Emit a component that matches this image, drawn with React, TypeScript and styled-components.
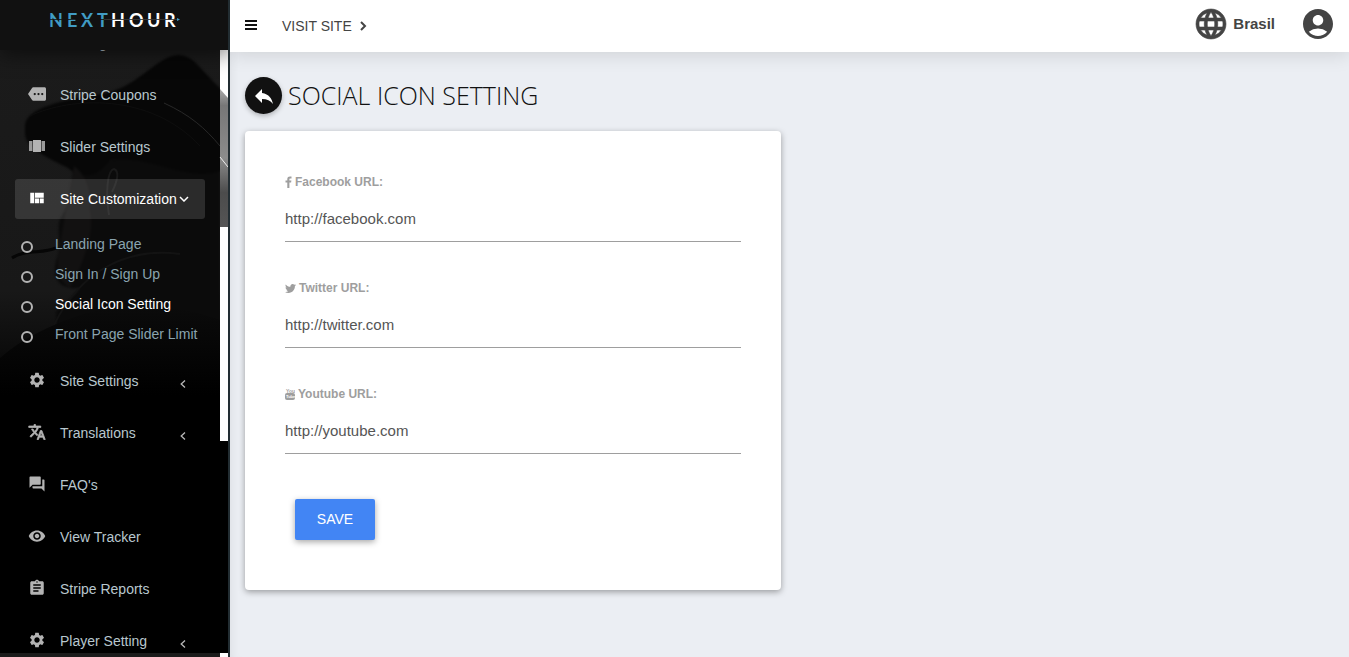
import React from "react";
import styled, { createGlobalStyle } from "styled-components";
import {
  MdMore,
  MdViewQuilt,
  MdSettings,
  MdTranslate,
  MdForum,
  MdVisibility,
  MdAssignment,
  MdLanguage,
  MdAccountCircle,
  MdReply,
  MdInventory,
} from "react-icons/md";
import { FaTwitter } from "react-icons/fa";

const GlobalStyle = createGlobalStyle`
  *, *::before, *::after { box-sizing: border-box; }
  body {
    margin: 0;
    background: #ebeef3;
    font-family: "Liberation Sans", Arial, sans-serif;
    font-size: 14px;
    color: #333;
  }
`;

const Layout = styled.div`
  display: flex;
  min-height: 100vh;
`;

const Sidebar = styled.aside`
  position: sticky;
  top: 0;
  display: flex;
  flex-direction: column;
  flex: none;
  width: 230px;
  height: 100vh;
  background: #000;
  border-right: 2px solid #222d32;
  overflow: hidden;
`;

const Brand = styled.a`
  position: relative;
  z-index: 2;
  display: block;
  flex: none;
  height: 50px;
  margin-right: -2px;
  background: #111;
  box-shadow: 0 5px 20px rgba(0, 0, 0, 0.5);
`;

const Nav = styled.nav`
  position: relative;
  flex: 1;
  min-height: 0;
  overflow: hidden;
`;

const Backdrop = styled.svg`
  position: absolute;
  top: 0;
  left: 0;
`;

const Menu = styled.ul`
  position: relative;
  display: flex;
  flex-direction: column;
  gap: 12px;
  margin: -27px 23px 0 15px;
  padding: 0;
  list-style: none;
`;

const MenuLink = styled.a<{ $active?: boolean }>`
  display: flex;
  align-items: center;
  height: 40px;
  padding: 0 15px 0 13px;
  border-radius: 3px;
  background: ${(p) => (p.$active ? "rgba(200, 200, 200, 0.17)" : "transparent")};
  color: ${(p) => (p.$active ? "#fff" : "#b8c7ce")};
  text-decoration: none;
  white-space: nowrap;

  > svg:first-child {
    flex: none;
    width: 18px;
    height: 18px;
    margin: 0 14px 2px 0;
    color: ${(p) => (p.$active ? "#fff" : "#b3b3b3")};
  }

  path[fill="none"] {
    stroke: none;
  }
`;

const LinkText = styled.span`
  line-height: 20px;
`;

const MenuItem = styled.li`
  width: 190px;
`;

const SideArrow = styled.svg`
  width: 6px;
  height: 10px;
  margin: 6px 4px 0 auto;
  color: #b8b8b8;
`;

const DownArrow = styled.svg`
  width: 10px;
  height: 6px;
  margin-left: 2px;
`;

const SubMenu = styled.ul`
  margin: 10px 0 0;
  padding: 0;
  list-style: none;
`;

const SubLink = styled.a<{ $active?: boolean }>`
  display: flex;
  align-items: center;
  gap: 22px;
  height: 30px;
  padding-left: 6px;
  color: ${(p) => (p.$active ? "#fff" : "#8aa4af")};
  text-decoration: none;
  white-space: nowrap;
`;

const Ring = styled.span`
  flex: none;
  width: 12px;
  height: 12px;
  margin-top: 6px;
  border: 2px solid #b3b3b3;
  border-radius: 50%;
`;

const Page = styled.div`
  display: flex;
  flex-direction: column;
  flex: 1;
  min-width: 0;
  box-shadow: inset 8px 0 8px -6px rgba(0, 0, 0, 0.06);
`;

const TopBar = styled.header`
  display: flex;
  align-items: center;
  height: 52px;
  padding: 0 15px;
  background: #fff;
  box-shadow: 0 2px 20px rgba(0, 0, 0, 0.13);
`;

const BarsButton = styled.button`
  display: flex;
  width: 12px;
  margin: 0 25px 2px 0;
  padding: 0;
  border: 0;
  background: none;
  color: #111;
`;

const VisitLink = styled.a`
  display: flex;
  align-items: center;
  gap: 8px;
  color: #444;
  line-height: 20px;
  text-decoration: none;
`;

const TopActions = styled.div`
  display: flex;
  align-items: center;
  gap: 25px;
  margin: 0 -2px 5px auto;
`;

const LanguageButton = styled.button`
  display: flex;
  align-items: center;
  gap: 4px;
  padding: 0;
  border: 0;
  background: none;
  color: #444;
  font: bold 15px "Liberation Sans", Arial, sans-serif;

  path:not([fill="none"]) {
    stroke-width: 0.4px;
  }

  path[fill="none"] {
    stroke: none;
  }
`;

const AccountButton = styled.button`
  display: flex;
  padding: 0;
  border: 0;
  background: none;
  color: #444;
`;

const Content = styled.main`
  padding: 25px 15px;
`;

const TitleRow = styled.div`
  display: flex;
  align-items: center;
  gap: 6px;
  margin-bottom: 17px;
`;

const BackLink = styled.a`
  display: flex;
  align-items: center;
  justify-content: center;
  width: 37px;
  height: 37px;
  border-radius: 50%;
  background: #111;
  color: #fff;
  box-shadow: 0 2px 5px rgba(0, 0, 0, 0.26);
`;

const Title = styled.h1`
  margin: 0;
  color: #111;
  font: 300 25px/37px "Open Sans", sans-serif;
`;

const Columns = styled.div`
  display: grid;
  grid-template-columns: 1fr 1fr;
  gap: 17px;
`;

const Card = styled.form`
  padding: 41px 40px 50px;
  border-radius: 4px;
  background: #fff;
  box-shadow: 0 2px 6px rgba(0, 0, 0, 0.35);
`;

const Field = styled.div`
  display: flex;
  flex-direction: column;
  gap: 5px;
  margin-bottom: 36px;
`;

const Label = styled.label`
  display: flex;
  align-items: center;
  gap: 3px;
  color: #9e9e9e;
  font-size: 12px;
  font-weight: bold;
  line-height: 20px;
`;

const TextInput = styled.input`
  width: 100%;
  height: 45px;
  padding: 0 0 2px;
  border: 0;
  border-bottom: 1px solid #9e9e9e;
  outline: 0;
  background: transparent;
  color: #555;
  font: 15px "Liberation Sans", Arial, sans-serif;
`;

const SaveButton = styled.button`
  display: block;
  width: 80px;
  height: 41px;
  margin: 45px 0 0 10px;
  padding: 0 0 2px;
  border: 0;
  border-radius: 2px;
  background: #4285f4;
  color: #fff;
  font: 14px "Liberation Sans", Arial, sans-serif;
  box-shadow: 0 2px 6px rgba(0, 0, 0, 0.35);
`;

const Fields = styled.div`
  ${Field}:last-child {
    margin-bottom: 0;
  }
`;

const Logo = () => (
  <svg width="228" height="50" role="img" aria-label="NextHour">
    <g fontFamily="Lato, sans-serif" fontWeight="700" fontSize="18">
      <text x="49 67 81 97" y="27" fill="#419cc4">NEXT</text>
      <text x="111 129 147 164" y="27" fill="#fff">HOUR</text>
    </g>
    <path d="M50 19.5H176" stroke="#111" strokeWidth="1" opacity=".8" />
    <path d="M104 19.5H177" stroke="#666" strokeWidth="1" opacity=".4" />
    <path d="M177 18l3 1.5-3 1.5z" fill="#419cc4" />
  </svg>
);

const Photo = () => (
  <Backdrop width="228" height="607" aria-hidden="true">
    <defs>
      <linearGradient id="veil" x1="0" y1="0" x2="0" y2="1">
        <stop offset="0" stopColor="#1b1b1b" />
        <stop offset=".4" stopColor="#181818" />
        <stop offset=".5" stopColor="#0c0c0c" />
        <stop offset=".56" stopColor="#000" />
      </linearGradient>
      <linearGradient id="edge" x1="0" y1="0" x2="0" y2="1">
        <stop offset="0" stopColor="#aaa" />
        <stop offset=".12" stopColor="#777" />
        <stop offset=".5" stopColor="#8c8c8c" />
        <stop offset=".75" stopColor="#4c4c4c" />
        <stop offset="1" stopColor="#555" />
      </linearGradient>
      <linearGradient id="ground" x1="0" y1="0" x2="0" y2="1">
        <stop offset="0" stopColor="#0b0b0b" />
        <stop offset="1" stopColor="#000" />
      </linearGradient>
      <filter id="soft" colorInterpolationFilters="sRGB"><feGaussianBlur stdDeviation="1" /></filter>
    </defs>
    <rect width="220" height="603" fill="url(#veil)" />
    <g filter="url(#soft)">
      <path d="M72 112C90 125 110 100 160 110L220 95V330H60L56 262C75 245 85 235 76 238C58 240 50 225 58 205C62 190 55 175 62 165C72 150 74 130 72 112Z" fill="#0b0b0b" />
      <path d="M25 76C26 58 60 50 108 43C140 34 158 6 178 5C194 5 200 20 222 40V120C190 134 150 104 110 110C95 130 80 128 68 118C48 108 26 98 25 84Z" fill="#070707" />
      <path d="M74 116C86 125 92 140 90 160C95 180 85 210 70 238C60 232 56 220 58 205Z" fill="#121111" />
    </g>
    <path d="M30 66C70 47 150 42 200 96" fill="none" stroke="#0e0e0e" />
    <path d="M164 53C190 65 205 78 220 96" fill="none" stroke="#282828" />
    <path d="M109 165C105 140 108 120 114 119C120 121 117 132 112 142" fill="none" stroke="#191919" strokeWidth="2" />
    <path d="M12 208C25 199 42 204 56 198" fill="none" stroke="#060606" strokeWidth="3" />
    <path d="M54 275C80 222 125 197 180 204" fill="none" stroke="#131313" strokeWidth="2" />
    <path d="M0 308C20 290 50 275 80 265C130 250 180 255 220 270V345H0Z" fill="url(#ground)" />
    <rect x="220" width="8" height="391" fill="#fff" />
    <path d="M220 39L228 48V177H220Z" fill="url(#edge)" />
    <path d="M220 107L228 117" stroke="#eee" strokeWidth="1" />
    <rect y="603" width="220" height="4" fill="#1b1b1b" />
    <rect x="220" y="603" width="8" height="4" fill="#fff" />
  </Backdrop>
);

const CarouselGlyph = () => (
  <svg viewBox="0 0 18 18" fill="currentColor" aria-hidden="true">
    <path d="M5 3h8v12H5z" />
    <path d="M1 4h3v10H1zM14 4h3v10h-3z" opacity=".85" />
    <path d="M4 4h1v10H4zM13 4h1v10h-1z" opacity=".4" />
  </svg>
);

const FacebookGlyph = () => (
  <svg width="7" height="12" viewBox="0 0 7 12" fill="currentColor" aria-hidden="true">
    <path d="M6.5.6v1.8H5.4c-.8 0-1 .4-1 1v1.2h2l-.3 2h-1.7V12H2.3V6.6H.5v-2h1.8V3.1C2.3 1.3 3.4.5 5 .5c.7 0 1.3 0 1.5.1z" />
  </svg>
);

const YoutubeGlyph = () => (
  <svg width="10" height="12" viewBox="0 0 10 12" aria-hidden="true">
    <g fontFamily="Liberation Sans, sans-serif" fontWeight="700">
      <text x="1" y="5" fontSize="5" fill="#9e9e9e">You</text>
      <rect y="5" width="10" height="7" rx="2" fill="#9e9e9e" />
      <text x="1" y="10" fontSize="4" fill="#fff">Tube</text>
    </g>
  </svg>
);

const siteParts = [
  { label: "Landing Page" },
  { label: "Sign In / Sign Up" },
  { label: "Social Icon Setting", active: true },
  { label: "Front Page Slider Limit" },
];

type Entry = {
  label: string;
  icon: React.ReactNode;
  more?: boolean;
  parts?: { label: string; active?: boolean }[];
};

const entries: Entry[] = [
  { label: "Packages", icon: <MdInventory /> },
  { label: "Stripe Coupons", icon: <MdMore /> },
  { label: "Slider Settings", icon: <CarouselGlyph /> },
  { label: "Site Customization", icon: <MdViewQuilt />, parts: siteParts },
  { label: "Site Settings", icon: <MdSettings />, more: true },
  { label: "Translations", icon: <MdTranslate strokeWidth={1} />, more: true },
  { label: "FAQ's", icon: <MdForum /> },
  { label: "View Tracker", icon: <MdVisibility /> },
  { label: "Stripe Reports", icon: <MdAssignment /> },
  { label: "Player Setting", icon: <MdSettings />, more: true },
];

const fields = [
  { id: "facebook", label: "Facebook URL:", value: "http://facebook.com", icon: <FacebookGlyph /> },
  { id: "twitter", label: "Twitter URL:", value: "http://twitter.com", icon: <FaTwitter size={11} /> },
  { id: "youtube", label: "Youtube URL:", value: "http://youtube.com", icon: <YoutubeGlyph /> },
];

export default function App() {
  return (
    <>
      <GlobalStyle />
      <Layout>
        <Sidebar>
          <Brand href="#"><Logo /></Brand>
          <Nav>
            <Photo />
            <Menu>
              {entries.map((entry) => (
                <MenuItem key={entry.label}>
                  <MenuLink href="#" $active={!!entry.parts}>
                    {entry.icon}
                    <LinkText>{entry.label}</LinkText>
                    {entry.parts && (
                      <DownArrow viewBox="0 0 10 6" strokeWidth="1.5">
                        <polyline points="1,1 5,5 9,1" fill="none" stroke="currentColor" />
                      </DownArrow>
                    )}
                    {entry.more && (
                      <SideArrow viewBox="0 0 6 10" strokeWidth="1.3">
                        <polyline points="5,1.5 1.2,5 5,8.5" fill="none" stroke="currentColor" />
                      </SideArrow>
                    )}
                  </MenuLink>
                  {entry.parts && (
                    <SubMenu>
                      {entry.parts.map((part) => (
                        <li key={part.label}>
                          <SubLink href="#" $active={part.active}>
                            <Ring />
                            {part.label}
                          </SubLink>
                        </li>
                      ))}
                    </SubMenu>
                  )}
                </MenuItem>
              ))}
            </Menu>
          </Nav>
        </Sidebar>
        <Page>
          <TopBar>
            <BarsButton type="button" aria-label="Toggle menu">
              <svg width="12" height="10" fill="currentColor">
                <rect width="12" height="2" />
                <rect y="4" width="12" height="2" />
                <rect y="8" width="12" height="2" />
              </svg>
            </BarsButton>
            <VisitLink href="#">
              VISIT SITE
              <svg width="7" height="10" fill="none" stroke="currentColor" strokeWidth="2">
                <path d="M1 1l4 4-4 4" />
              </svg>
            </VisitLink>
            <TopActions>
              <LanguageButton type="button">
                <MdLanguage size={36} />
                Brasil
              </LanguageButton>
              <AccountButton type="button" aria-label="Account">
                <MdAccountCircle size={36} />
              </AccountButton>
            </TopActions>
          </TopBar>
          <Content>
            <TitleRow>
              <BackLink href="#" aria-label="Back"><MdReply size={24} /></BackLink>
              <Title>SOCIAL ICON SETTING</Title>
            </TitleRow>
            <Columns>
              <Card>
                <Fields>
                  {fields.map((f) => (
                    <Field key={f.id}>
                      <Label htmlFor={f.id}>{f.icon}{f.label}</Label>
                      <TextInput id={f.id} type="text" defaultValue={f.value} />
                    </Field>
                  ))}
                </Fields>
                <SaveButton type="button">SAVE</SaveButton>
              </Card>
            </Columns>
          </Content>
        </Page>
      </Layout>
    </>
  );
}
